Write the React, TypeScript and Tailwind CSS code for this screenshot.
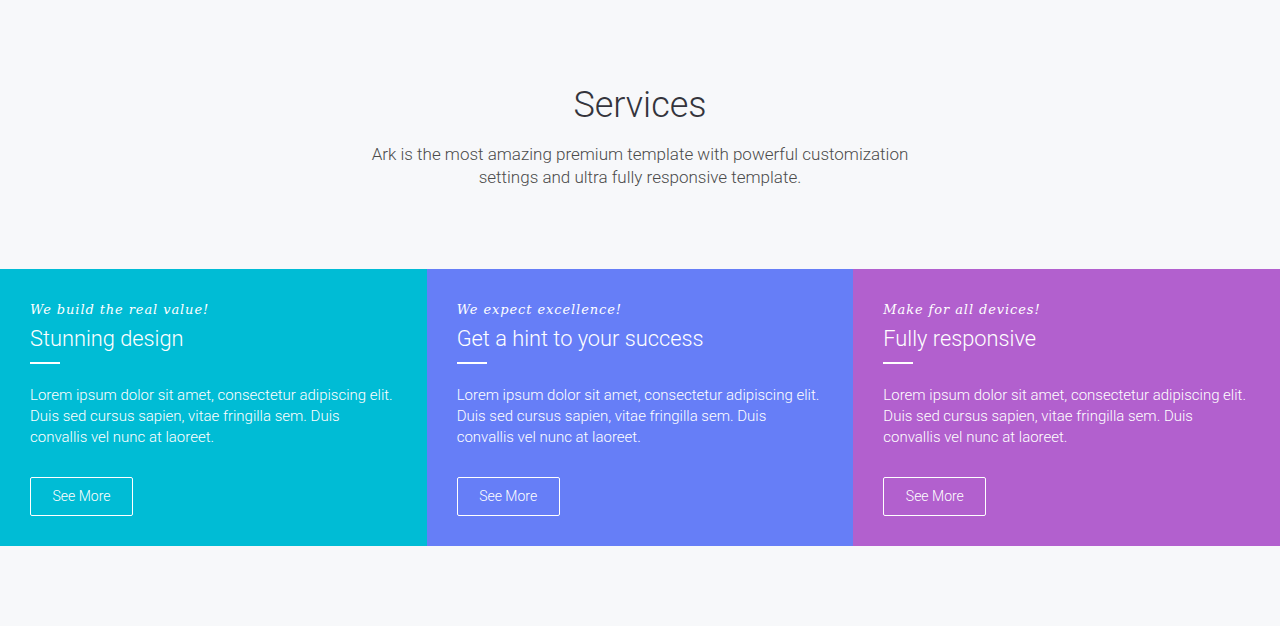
import React from "react";

type Service = {
  tagline: string;
  title: string;
  text: string;
  bg: string;
};

const services: Service[] = [
  {
    tagline: "We build the real value!",
    title: "Stunning design",
    text: "Lorem ipsum dolor sit amet, consectetur adipiscing elit. Duis sed cursus sapien, vitae fringilla sem. Duis convallis vel nunc at laoreet.",
    bg: "bg-[#00bcd5]",
  },
  {
    tagline: "We expect excellence!",
    title: "Get a hint to your success",
    text: "Lorem ipsum dolor sit amet, consectetur adipiscing elit. Duis sed cursus sapien, vitae fringilla sem. Duis convallis vel nunc at laoreet.",
    bg: "bg-[#667ef7]",
  },
  {
    tagline: "Make for all devices!",
    title: "Fully responsive",
    text: "Lorem ipsum dolor sit amet, consectetur adipiscing elit. Duis sed cursus sapien, vitae fringilla sem. Duis convallis vel nunc at laoreet.",
    bg: "bg-[#b260ce]",
  },
];

function ServiceCard({ service }: { service: Service }) {
  return (
    <div className={`${service.bg} px-[30px] pt-[31px] h-[277px] text-white`}>
      <p className="font-['DejaVu_Serif',serif] italic text-[13px] tracking-[0.9px] leading-[20px]">
        {service.tagline}
      </p>
      <h3 className="mt-[4px] text-[21.8px] leading-[30px] font-light">
        {service.title}
      </h3>
      <div className="mt-[8px] w-[30px] h-[2px] bg-white" />
      <p className="mt-[21px] text-[15px] leading-[21px] font-light">
        {service.text}
      </p>
      <button className="mt-[29px] w-[103px] h-[39px] border border-white rounded-[2px] text-[14px] font-light">
        See More
      </button>
    </div>
  );
}

export default function App() {
  return (
    <div className="min-h-[626px] bg-[#f7f8fa] font-['Roboto',sans-serif]">
      <div className="pt-[84px] pb-[80px] text-center">
        <h2 className="text-[36px] leading-[42px] font-light text-[#34343c]">
          Services
        </h2>
        <p className="mt-[17px] mx-auto max-w-[580px] text-[17px] leading-[23px] font-light text-[#4b4b4b]">
          Ark is the most amazing premium template with powerful customization
          settings and ultra fully responsive template.
        </p>
      </div>
      <div className="grid grid-cols-3">
        {services.map((s) => (
          <ServiceCard key={s.title} service={s} />
        ))}
      </div>
    </div>
  );
}
